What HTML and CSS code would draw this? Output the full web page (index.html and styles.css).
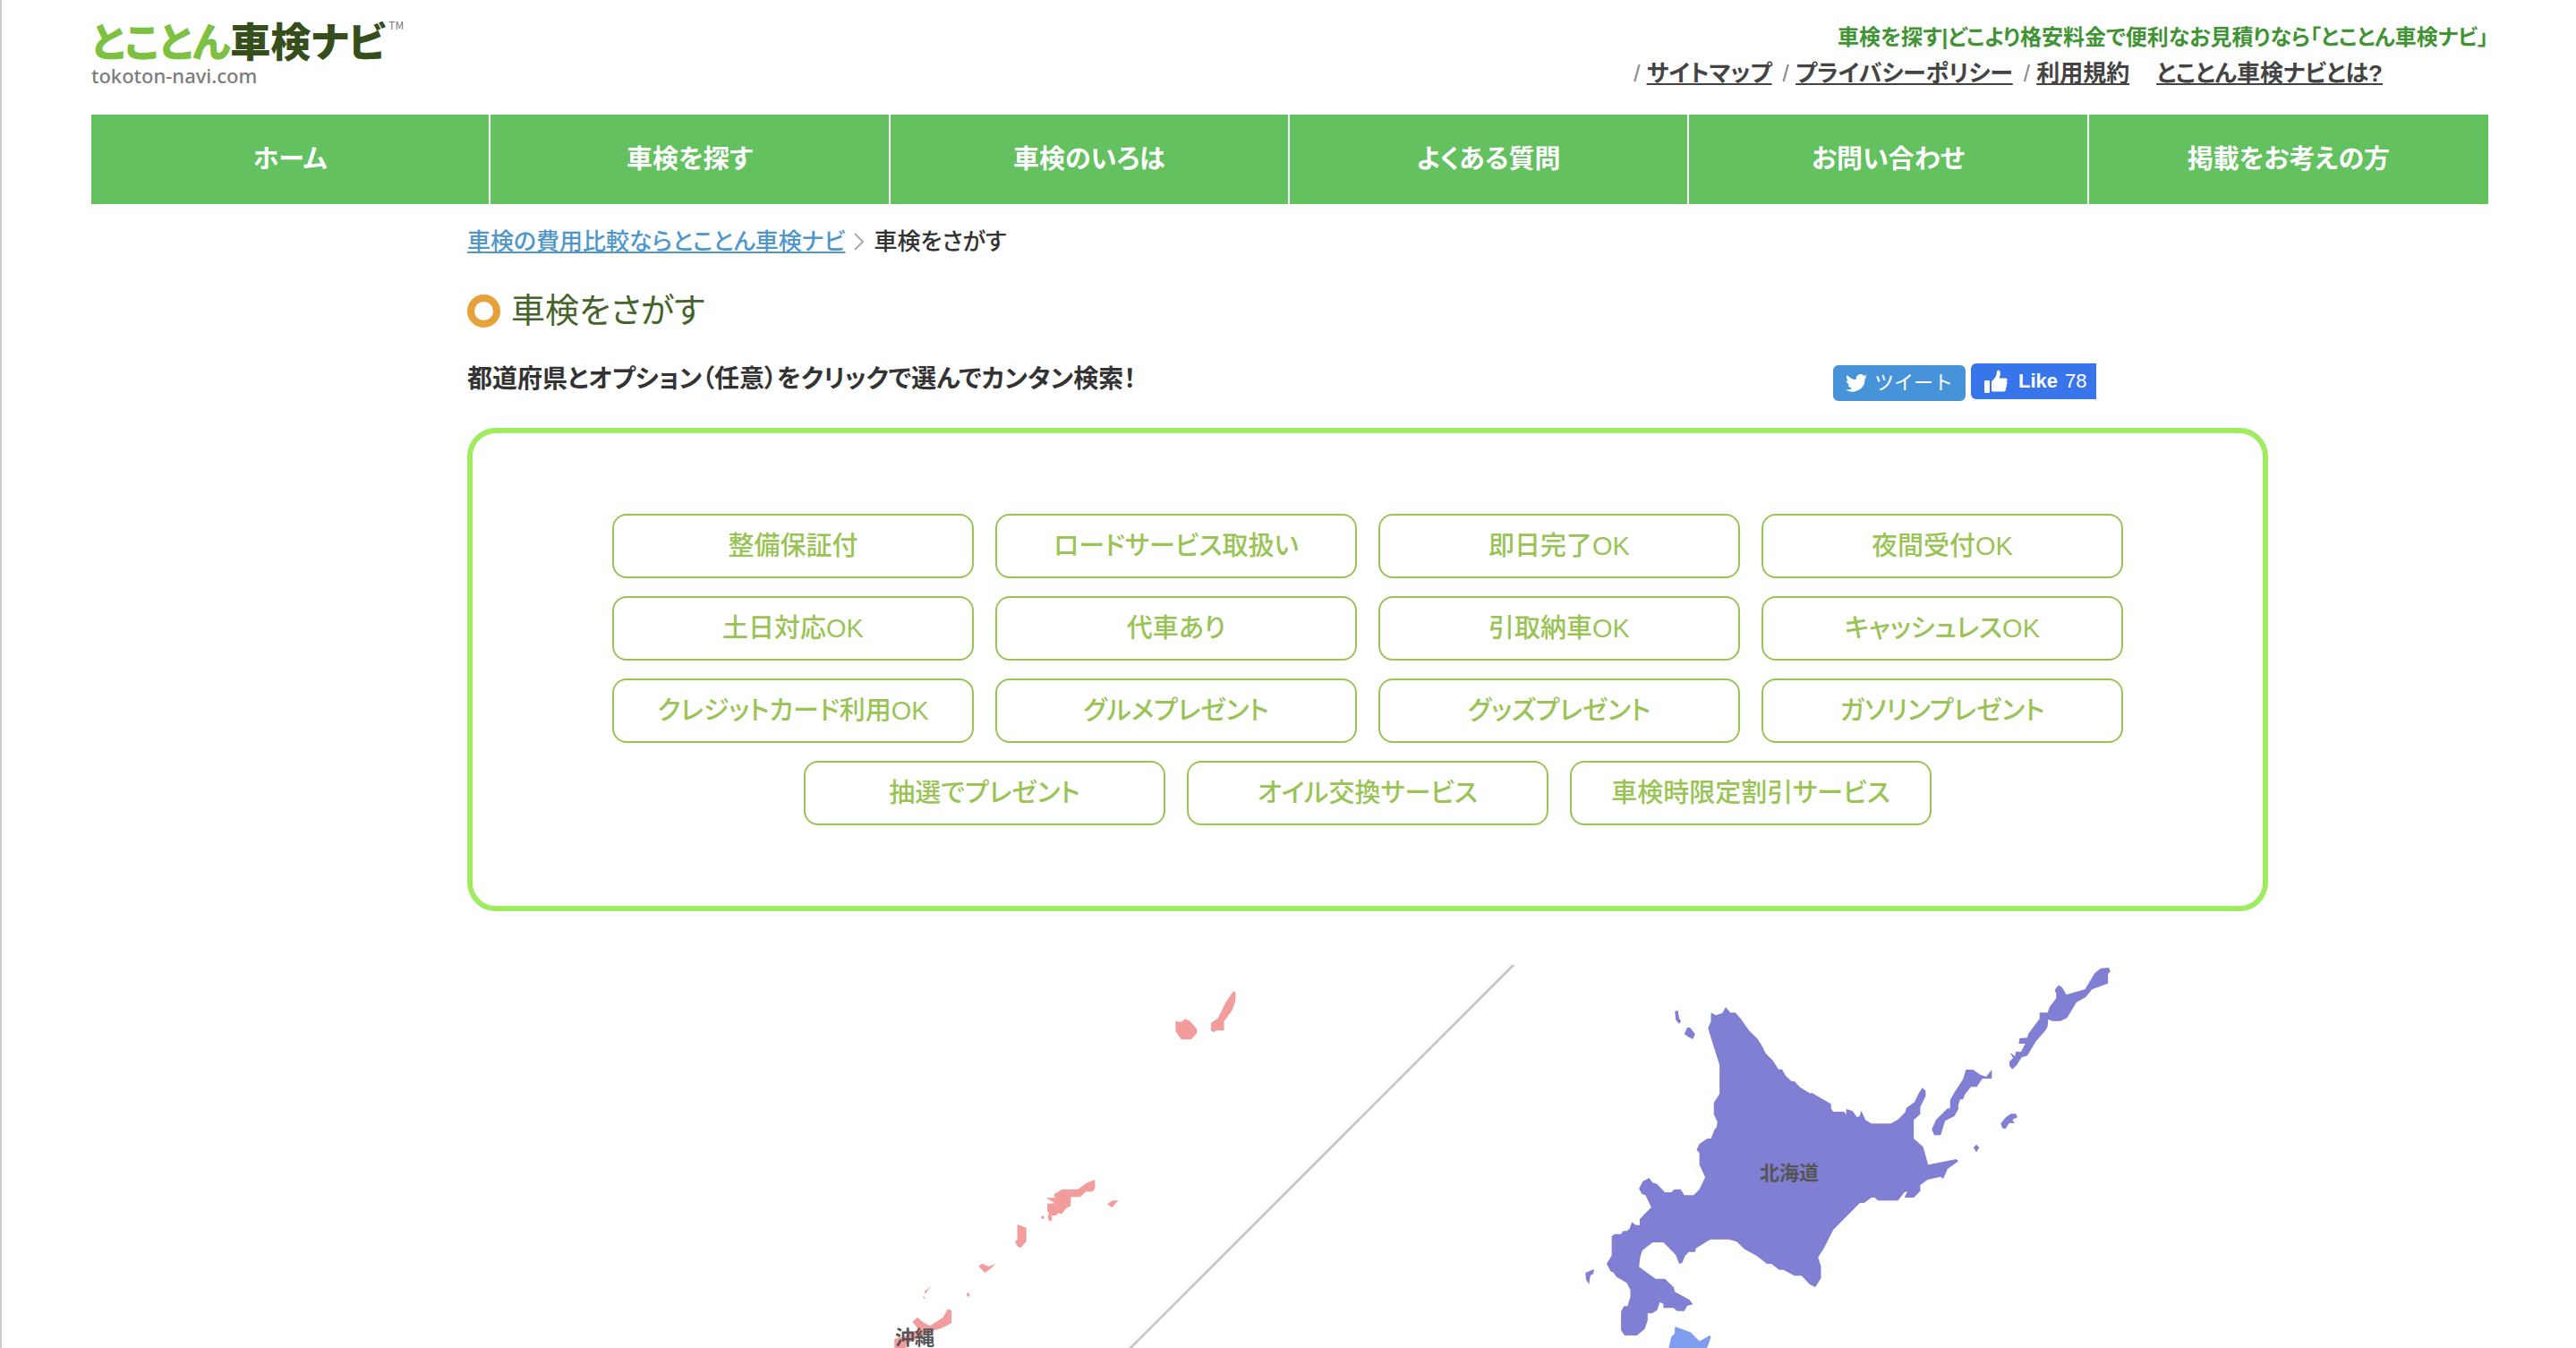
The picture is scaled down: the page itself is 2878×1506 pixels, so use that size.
FILE: index.html
```html
<!DOCTYPE html>
<html lang="ja">
<head>
<meta charset="utf-8">
<meta name="viewport" content="width=device-width, initial-scale=1">
<title>車検をさがす｜とことん車検ナビ</title>
<link rel="stylesheet" href="styles.css">
</head>
<body>
<header class="header">
  <a class="logo" href="#">
    <span class="logo-name"><span class="logo-light">とことん</span>車検ナビ<span class="logo-tm">TM</span></span>
    <span class="logo-domain">tokoton-navi.com</span>
  </a>
  <div class="header-info">
    <p class="tagline">車検を探す|どこより格安料金で便利なお見積りなら「とことん車検ナビ」</p>
    <ul class="sub-links">
      <li class="slashed"><a href="#">サイトマップ</a></li>
      <li class="slashed"><a href="#">プライバシーポリシー</a></li>
      <li class="slashed"><a href="#">利用規約</a></li>
      <li class="about"><a href="#">とことん車検ナビとは?</a></li>
    </ul>
  </div>
</header>
<nav class="nav">
  <a href="#">ホーム</a>
  <a href="#">車検を探す</a>
  <a href="#">車検のいろは</a>
  <a href="#">よくある質問</a>
  <a href="#">お問い合わせ</a>
  <a href="#">掲載をお考えの方</a>
</nav>
<main class="main">
  <div class="breadcrumb">
    <a href="#">車検の費用比較ならとことん車検ナビ</a>
    <svg class="chevron" viewBox="0 0 12 20" aria-hidden="true"><path d="M1 1l9 9-9 9"/></svg>
    <span>車検をさがす</span>
  </div>
  <h1 class="title">車検をさがす</h1>
  <div class="lead-row">
    <h2 class="lead">都道府県とオプション（任意）をクリックで選んでカンタン検索！</h2>
    <div class="social">
      <a class="tweet" href="#">
        <svg class="bird" viewBox="0 0 24 20" aria-hidden="true"><path d="M24 2.400a9.800 9.800 0 0 1-2.800.8A4.900 4.900 0 0 0 23.300.5a9.900 9.900 0 0 1-3.100 1.200 4.900 4.900 0 0 0-8.400 4.500A14 14 0 0 1 1.700 1a4.900 4.900 0 0 0 1.500 6.600A4.900 4.900 0 0 1 1 7v.1a4.900 4.900 0 0 0 3.900 4.800 4.900 4.900 0 0 1-2.200.1 4.900 4.900 0 0 0 4.600 3.400A9.900 9.900 0 0 1 0 17.500 14 14 0 0 0 21.500 5A10 10 0 0 0 24 2.400z"/></svg>
        <span>ツイート</span>
      </a>
      <button class="like" type="button">
        <svg class="thumb" viewBox="0 0 26 26" aria-hidden="true"><path d="M1 12h4q1 0 1 1v12q0 1-1 1H1q-1 0-1-1V13q0-1 1-1zM8 23V13c2-2 4.500-4 5.500-7 .3-1.500.2-3 .6-4C15-.5 17.500.3 17.800 3c.3 2.500-.6 4.500-1 6.500h7c2.200 0 2.500 2.800.8 3.700 1.600.9 1.300 3.300-.3 3.700 1.200 1 .8 3-.6 3.500.9 1.800-.2 4.100-2 4.100H10q-2 0-2-1.500z"/></svg>
        <span>Like</span><span class="count">78</span>
      </button>
    </div>
  </div>
  <div class="options">
    <button type="button">整備保証付</button>
    <button type="button">ロードサービス取扱い</button>
    <button type="button">即日完了OK</button>
    <button type="button">夜間受付OK</button>
    <button type="button">土日対応OK</button>
    <button type="button">代車あり</button>
    <button type="button">引取納車OK</button>
    <button type="button">キャッシュレスOK</button>
    <button type="button">クレジットカード利用OK</button>
    <button type="button">グルメプレゼント</button>
    <button type="button">グッズプレゼント</button>
    <button type="button">ガソリンプレゼント</button>
    <button type="button">抽選でプレゼント</button>
    <button type="button">オイル交換サービス</button>
    <button type="button">車検時限定割引サービス</button>
  </div>
  <svg class="map" viewBox="0 0 2012 428" role="img" aria-label="都道府県の地図">
    <path class="divider" d="M1170-1L739 430"/>
    <g class="okinawa" transform="translate(458 -18) scale(.4592 .3333)">
      <path d="M726 243l14 2 9-10 12 7 17 27v13l-14 22h-24l-14-28z"/>
      <path d="M867 142l5 5v27l-9 34-19 35v31h-18l-8 6-6-6v-25l17-16 20-56z"/>
      <path d="M530 774V800L525 814H508L494 832H471V862L459 871L449 889L441 885L436 893L424 895L426 910L419 913L415 900L418 886L414 878V855L432 852L411 835H433L430 823L450 806H488L511 784z"/>
      <path d="M560 856l12-12h15l-16 23zM398 900l5-6 4 7-4 6zM341 924l22 11v46l-14 22-8-6-6-16 6-6zM247 1064l8-9 17 10 16-10-9 14-17 17zM133 1129l-16 18-3 9 5-3 5-10zM110 1164l6 3-1 7zM217 1158l4-7 5 9-5 8z"/>
      <path d="M86 1250L98 1235L112 1252L128 1264L160 1236L172 1207L181 1213V1254L160 1270L140 1279L110 1300L70 1325V1345H42V1308L68 1298L100 1275z"/>
    </g>
    <g class="hokkaido" transform="translate(1228 -8) scale(.4018 .3333)">
      <path d="M443 166L456 184H470L486 206L508 244L532 272L546 300L554 320L574 344L590 374H600L610 396L626 414H634L650 434L676 454H684L736 490V504L742 516H772L778 526V507L796 514L808 534L815 532L820 513L832 544L848 556H902L922 542L942 518L945 504L968 484L980 454L990 436L999 446V464L984 500V524L966 544V606L992 634L1006 694L1084 675L1090 682L1060 708L1048 740L1040 734L1004 744L984 762V782L966 804H940L948 784L940 786L922 814H866L858 804H848L828 822H816L742 912L716 974L700 1004L708 1034V1074L692 1104L676 1094L654 1066H634L604 1046H592L570 1026H558L528 998L494 976L474 952L452 944H400L360 974L358 986H340L330 1000L322 1022L314 1026L304 996L270 954H240L212 980L206 1000L202 1036L248 1076H274L298 1104L302 1120L342 1146L352 1162L336 1166L328 1184H308L298 1174H270V1160L260 1154L252 1182L238 1192H226V1216L218 1244L196 1266H162L152 1248V1186L160 1168H170L178 1136V1114L168 1090L140 1070L130 1054L124 1052L112 1026L126 998V934L134 926H152L158 916H168L176 908L182 886L194 896H204V876L236 836L220 796L210 792L202 774L212 750L230 738L240 754L252 758L274 786H292L300 776H318L328 796H354L370 776L386 736L370 694V654L362 644L370 624L392 606H402L412 576L418 568L420 550L410 524V486L426 456V360L402 268L394 236L402 214V184L416 193L434 185z"/>
      <path d="M302 180l8-4 4 28 5 8-5 10-10-14zM328 256l8-22h8l14 22-6 16-10-4zM53 1056l24-12-2 16-8 4-4 30-8-14zM1016 575l12-32 32-38h7v-28l10-22 26-48 8-32h20l18 16 18 8 16-24v30h-26l-16 28h-16l-16 24-6 18h-8l-6 22 2 8-12 26-26 16-12 48h-18zM1208 555l14-20 14-12h14l4 12-14 8 7 11h-16l-10 20-9-3zM1132 636l8-10 8 10-8 16z"/>
      <path d="M1470 50L1486 36L1508 33L1513 46L1506 54V86L1462 106L1444 132L1418 150L1392 202L1374 212H1350L1340 206L1338 230L1332 244L1306 280L1282 328L1266 334L1252 360L1240 374L1232 362V348L1242 336L1234 318L1248 330L1250 314L1264 316L1276 288H1258L1260 270L1282 268L1284 256L1316 204V184H1338L1344 164L1362 136V120L1358 108L1368 92L1378 98L1390 124L1442 106z"/>
    </g>
    <path class="aomori" transform="translate(1228 -8) scale(.4018 .3333)" d="M302 1236L346 1256L370 1286L398 1266L402 1272L390 1312H284L292 1270L301 1260z"/>
    <a href="#"><text x="1444" y="240">北海道</text></a>
    <a href="#"><text x="478" y="424">沖縄</text></a>
  </svg>
</main>
</body>
</html>
```
FILE: styles.css
```css
*, *::before { box-sizing: border-box; }

body {
  margin: 0;
  padding: 0 98px 0 100px;
  border-left: 2px solid #ccc;
  min-height: 100vh;
  background: #fff;
  color: #333;
  font-family: "Liberation Sans", "Noto Sans CJK JP", sans-serif;
  font-size: 26px;
  line-height: 40px;
  font-feature-settings: "palt";
}

button { font: inherit; font-feature-settings: inherit; cursor: pointer; }
p, ul, h1, h2 { margin: 0; padding: 0; }

/* header */
.header {
  display: flex;
  justify-content: space-between;
  height: 128px;
  padding-top: 20px;
}

.logo { display: block; color: #354e1b; text-decoration: none; }
.logo-name {
  display: flex;
  font-family: "Noto Sans CJK JP", sans-serif;
  font-size: 45px;
  font-weight: 900;
  line-height: 50px;
}
.logo-light { color: #7dc142; }
.logo-tm { margin-left: 4px; font-size: 12px; font-weight: 400; line-height: 16px; color: #777; }
.logo-domain {
  display: block;
  font-family: "Noto Sans", sans-serif;
  font-size: 22px;
  font-weight: 500;
  line-height: 28px;
  color: #7c7c7c;
}

.header-info { padding-top: 2px; font-weight: 700; text-align: right; }
.tagline { color: #409433; font-size: 24px; }
.sub-links {
  display: flex;
  justify-content: flex-end;
  padding-right: 118px;
  list-style: none;
}
.sub-links a { color: #444; }
.slashed { margin-left: 12px; }
.slashed::before { content: "/ "; color: #888; font-weight: 400; }
.about { margin-left: 30px; }

/* navigation */
.nav { display: grid; grid-template-columns: repeat(6, 1fr); }
.nav a {
  border-right: 2px solid #fff;
  background: #63c15f;
  color: #fff;
  font-size: 29px;
  font-weight: 700;
  line-height: 100px;
  text-align: center;
  text-decoration: none;
}
.nav a:last-child { border-right: 0; }

/* content */
.main { margin: 0 246px 0 420px; }

.breadcrumb {
  display: flex;
  align-items: center;
  gap: 10px;
  padding-top: 22px;
  font-weight: 500;
}
.breadcrumb a { color: #4f97cb; }
.chevron { width: 12px; height: 20px; fill: none; stroke: #aaa; stroke-width: 2; }

.title {
  display: flex;
  align-items: center;
  gap: 12px;
  margin-top: 32px;
  color: #44642b;
  font-size: 38px;
  font-weight: 400;
  line-height: 50px;
}
.title::before {
  content: "";
  width: 37px;
  height: 37px;
  border: 8px solid #e8a038;
  border-radius: 50%;
}

.lead-row {
  display: flex;
  justify-content: space-between;
  margin-top: 34px;
  padding-right: 192px;
}
.lead { font-size: 28px; font-weight: 700; line-height: 36px; }
.social { display: flex; gap: 6px; color: #fff; }
.tweet, .like {
  display: flex;
  align-items: center;
  height: 40px;
  border: 0;
  border-radius: 6px;
  color: #fff;
  font-size: 22px;
  text-decoration: none;
}
.tweet { gap: 8px; width: 148px; margin-top: 2px; padding: 0 14px; background: #4793da; font-feature-settings: normal; }
.bird { width: 24px; height: 20px; fill: #fff; }
.like { width: 140px; padding: 0 0 0 15px; border-radius: 6px 0 0 6px; background: #3874ea; font-weight: 700; }
.thumb { width: 26px; height: 26px; margin-right: 12px; fill: #fff; }
.count { margin-left: 8px; font-weight: 400; }

.options {
  display: flex;
  flex-wrap: wrap;
  justify-content: center;
  gap: 20px 24px;
  margin-top: 30px;
  padding: 90px 100px;
  border: 6px solid #a0ec60;
  border-radius: 32px;
}
.options button {
  width: 404px;
  height: 72px;
  padding: 0;
  border: 2px solid #99c455;
  border-radius: 16px;
  background: #fff;
  color: #99c455;
  font-size: 29px;
  font-weight: 500;
}

/* map */
.map { display: block; width: 100%; height: auto; margin-top: 60px; overflow: hidden; }
.divider { stroke: #c8c8c8; stroke-width: 3; }
.okinawa { fill: #f29d9b; }
.hokkaido { fill: #807fd4; }
.aomori { fill: #7f9df0; }
.map text { fill: #555; font-size: 22px; font-weight: 700; font-feature-settings: normal; }
```
